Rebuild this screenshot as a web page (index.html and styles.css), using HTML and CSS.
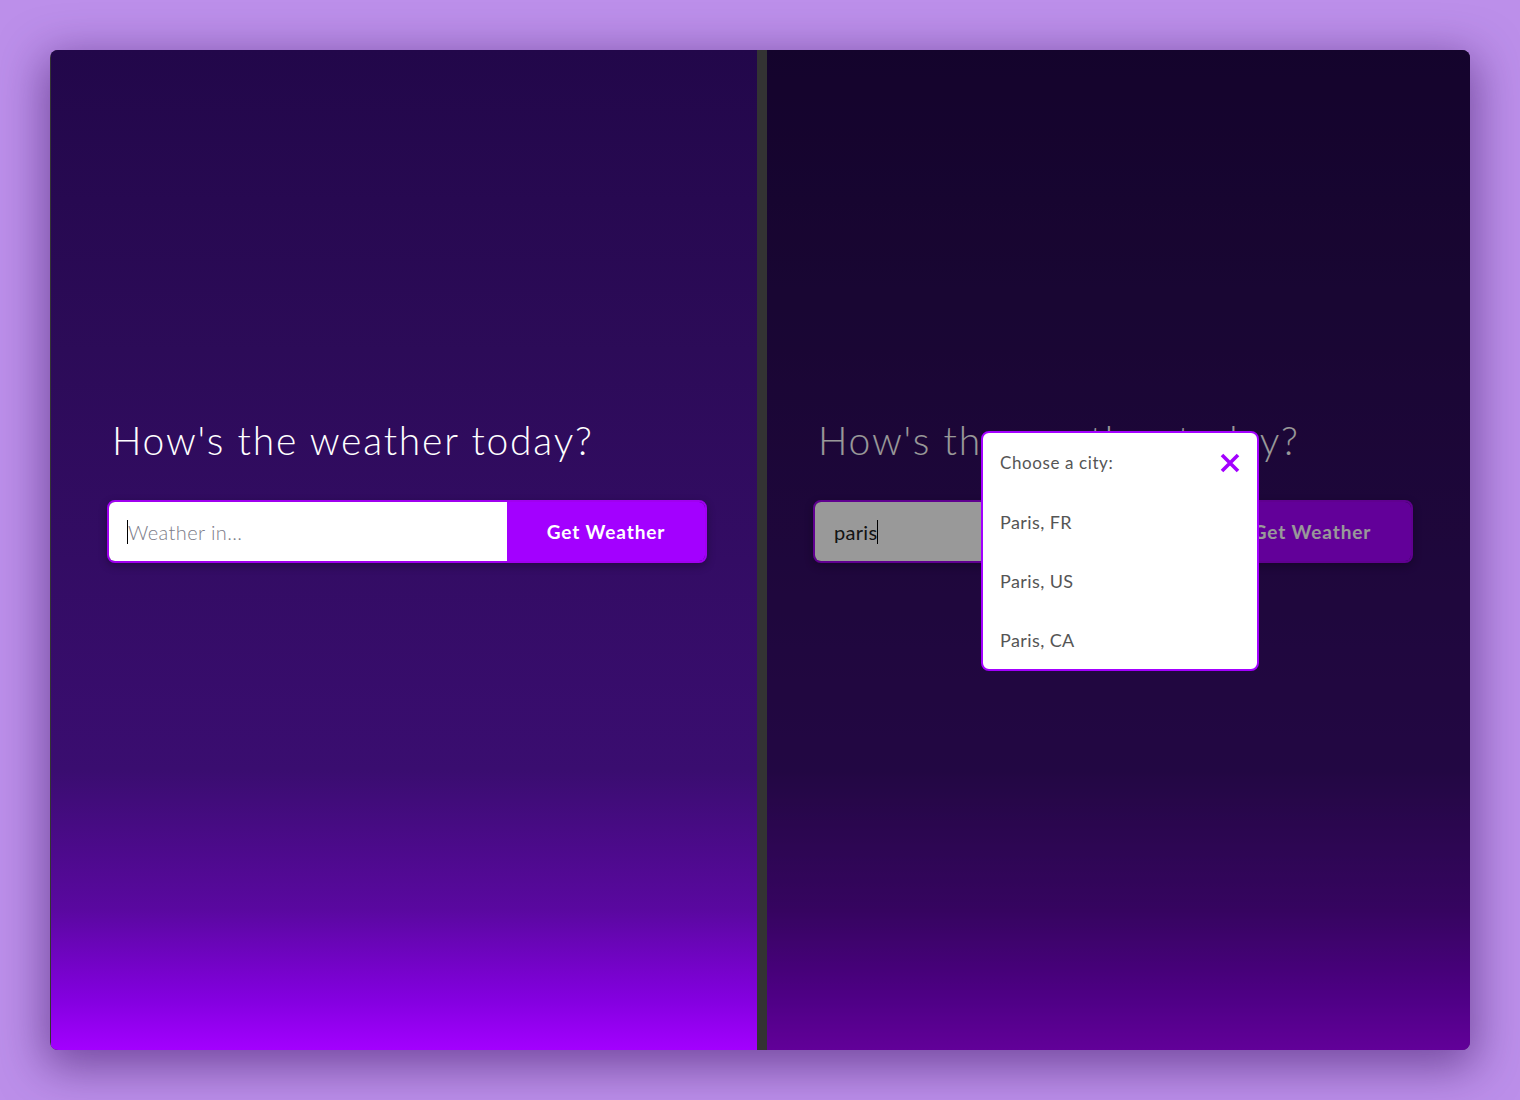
FILE: index.html
```html
<!DOCTYPE html>
<html lang="en">
<head>
<meta charset="utf-8">
<title>Weather</title>
<link rel="stylesheet" href="styles.css">
</head>
<body>
<div class="card">
  <section class="panel panel-left">
    <h1 class="title">How's the weather today?</h1>
    <div class="search">
      <div class="field"><span class="caret"></span><span class="placeholder">Weather in...</span></div>
      <div class="btn">Get Weather</div>
    </div>
  </section>
  <section class="panel panel-right">
    <h1 class="title">How's the weather today?</h1>
    <div class="search">
      <div class="field"><span class="value">paris</span><span class="caret"></span></div>
      <div class="btn">Get Weather</div>
    </div>
    <div class="shade"></div>
    <div class="modal">
      <div class="row head">
        <span>Choose a city:</span>
        <svg class="close" width="22" height="22" viewBox="0 0 22 22"><path d="M3 3 L19 19 M19 3 L3 19" stroke="#a300ff" stroke-width="3.6" stroke-linecap="butt" fill="none"/></svg>
      </div>
      <div class="row">Paris, FR</div>
      <div class="row">Paris, US</div>
      <div class="row">Paris, CA</div>
    </div>
  </section>
</div>
</body>
</html>
```
FILE: styles.css
```css
* { box-sizing: border-box; }
html, body { margin: 0; padding: 0; }
body {
  width: 1520px;
  height: 1100px;
  background: #bc8fea;
  font-family: Lato, "Noto Sans", sans-serif;
  padding: 50px;
  overflow: hidden;
}
.card {
  width: 1420px;
  height: 1000px;
  display: flex;
  gap: 10px;
  background: #333;
  border-radius: 8px;
  overflow: hidden;
  padding-left: 1px;
  box-shadow: 0 12px 45px 6px rgba(60, 20, 100, 0.55);
}
.panel {
  position: relative;
  height: 100%;
  background: linear-gradient(to bottom, #22074a 0%, #2c0b58 30%, #3a0d70 72%, #5a08a0 86%, #8400e0 95%, #a300ff 100%);
}
.panel-left { width: 706px; padding: 362px 0 0 56px; }
.panel-right { flex: 1; padding: 362px 0 0 46px; }
.title {
  margin: 0 0 32px 5px;
  font-weight: 300;
  font-size: 39px;
  line-height: 56px;
  color: #ffffff;
  letter-spacing: 1.8px;
}
.search {
  display: flex;
  width: 600px;
  height: 63px;
  border: 2px solid #a000f0;
  border-radius: 8px;
  overflow: hidden;
  box-shadow: 0 3px 8px rgba(0, 0, 0, 0.3);
}
.field {
  width: 398px;
  background: #ffffff;
  display: flex;
  align-items: center;
  padding-left: 18px;
  font-size: 20px;
}
.placeholder { color: #7c7c88; font-weight: 300; letter-spacing: 0.4px; }
.value { color: #222; padding-left: 1px; letter-spacing: 0.3px; }
.caret {
  display: inline-block;
  width: 1px;
  height: 24px;
  background: #000;
}
.btn {
  flex: 1;
  background: #a300ff;
  color: #ffffff;
  font-size: 19px;
  font-weight: 700;
  display: flex;
  align-items: center;
  justify-content: center;
  letter-spacing: 0.9px;
}
.shade {
  position: absolute;
  inset: 0;
  background: rgba(0, 0, 0, 0.4);
}
.modal {
  position: absolute;
  left: 214px;
  top: 381px;
  width: 278px;
  height: 240px;
  background: #ffffff;
  border: 2px solid #a300ff;
  border-radius: 8px;
  display: flex;
  flex-direction: column;
}
.row {
  height: 59px;
  display: flex;
  align-items: center;
  padding: 0 17px;
  font-size: 18px;
  color: #555555;
  font-weight: 400;
  letter-spacing: 0.4px;
}
.head {
  justify-content: space-between;
  font-size: 17px;
  padding-right: 16px;
  letter-spacing: 0.6px;
}
.close { display: block; }
```
